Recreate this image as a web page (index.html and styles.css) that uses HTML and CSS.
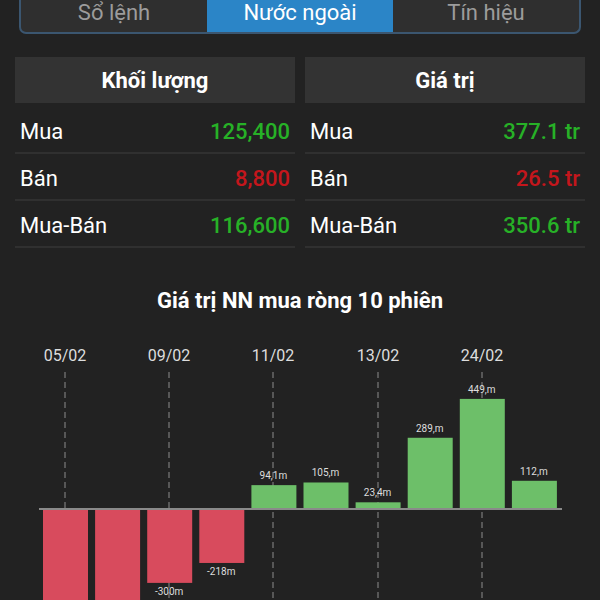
FILE: index.html
```html
<!DOCTYPE html>
<html>
  <head>
    <title>Nước ngoài</title>
    <link rel="stylesheet" href="styles.css">
  </head>
  <body>
    <div class="tabs">
      <div class="tab">Sổ lệnh</div>
      <div class="tab active">Nước ngoài</div>
      <div class="tab">Tín hiệu</div>
    </div>

    <div class="tables">
      <div class="table">
        <div class="table-head">Khối lượng</div>
        <div class="row"><span>Mua</span><span class="up">125,400</span></div>
        <div class="row"><span>Bán</span><span class="down">8,800</span></div>
        <div class="row"><span>Mua-Bán</span><span class="up">116,600</span></div>
      </div>
      <div class="table">
        <div class="table-head">Giá trị</div>
        <div class="row"><span>Mua</span><span class="up">377.1 tr</span></div>
        <div class="row"><span>Bán</span><span class="down">26.5 tr</span></div>
        <div class="row"><span>Mua-Bán</span><span class="up">350.6 tr</span></div>
      </div>
    </div>

    <h2 class="chart-title">Giá trị NN mua ròng 10 phiên</h2>

    <svg class="chart" width="600" height="284" viewBox="0 316 600 284">
      <!-- date guides -->
      <g class="guides">
        <line x1="65" y1="372" x2="65" y2="600" />
        <line x1="169" y1="372" x2="169" y2="600" />
        <line x1="273" y1="372" x2="273" y2="600" />
        <line x1="378" y1="372" x2="378" y2="600" />
        <line x1="482" y1="372" x2="482" y2="600" />
      </g>
      <g class="dates">
        <text x="65" y="361">05/02</text>
        <text x="169" y="361">09/02</text>
        <text x="273" y="361">11/02</text>
        <text x="378" y="361">13/02</text>
        <text x="482" y="361">24/02</text>
      </g>
      <line class="axis" x1="39" y1="509" x2="562" y2="509" />
      <g id="bars"></g>
    </svg>

    <script>
      // net foreign buy value per session (million)
      const sessions = [
        { v: -420, label: "" },
        { v: -420, label: "" },
        { v: -300, label: "-300m" },
        { v: -218, label: "-218m" },
        { v: 94.1, label: "94,1m" },
        { v: 105, label: "105,m" },
        { v: 23.4, label: "23,4m" },
        { v: 289, label: "289,m" },
        { v: 449, label: "449,m" },
        { v: 112, label: "112,m" },
      ];
      const bars = document.getElementById("bars");
      const ns = "http://www.w3.org/2000/svg";
      const base = 509;
      const scale = 0.243;

      sessions.forEach((s, i) => {
        const cx = 65 + i * 52.1;
        const h = Math.abs(s.v) * scale;
        const rect = document.createElementNS(ns, "rect");
        rect.setAttribute("x", cx - 22);
        rect.setAttribute("width", 45);
        if (s.v >= 0) {
          rect.setAttribute("y", base - 1 - h);
          rect.setAttribute("height", h);
          rect.setAttribute("class", "bar-up");
        } else {
          rect.setAttribute("y", base + 1);
          rect.setAttribute("height", h);
          rect.setAttribute("class", "bar-down");
        }
        bars.appendChild(rect);

        if (s.label) {
          const t = document.createElementNS(ns, "text");
          t.setAttribute("x", cx);
          t.setAttribute("y", s.v >= 0 ? base - h - 7 : base + h + 13);
          t.setAttribute("class", "bar-label");
          t.textContent = s.label;
          bars.appendChild(t);
        }
      });
    </script>
  </body>
</html>
```

FILE: styles.css
```css
body {
  margin: 0;
  background-color: #222222;
  font-family: Roboto, "Noto Sans", sans-serif;
  color: #ffffff;
  overflow: hidden;
}

.tabs {
  display: grid;
  grid-template-columns: 1fr 1fr 1fr;
  margin: -8px 19px 0;
  height: 40px;
  border: 2px solid #3b5670;
  border-top: none;
  border-radius: 0 0 7px 7px;
  overflow: hidden;
  background-color: #2f2f2f;
}

.tab {
  display: flex;
  justify-content: center;
  align-items: center;
  font-size: 22px;
  color: #9c9c9c;
}

.tab.active {
  background-color: #2b85c7;
  color: #ffffff;
}

.tables {
  display: flex;
  gap: 10px;
  padding: 23px 15px 0;
}

.table {
  flex: 1;
}

.table-head {
  height: 46px;
  display: flex;
  justify-content: center;
  align-items: center;
  background-color: #333333;
  font-size: 22px;
  font-weight: bold;
  margin-bottom: 4px;
}

.row {
  display: flex;
  justify-content: space-between;
  align-items: center;
  height: 42px;
  padding: 3px 5px 0;
  border-bottom: 2px solid #303030;
  font-size: 22px;
}

.up {
  color: #27b127;
  font-weight: 500;
}

.down {
  color: #c4161c;
  font-weight: 500;
}

.chart-title {
  margin: 41px 0 0;
  text-align: center;
  font-size: 22px;
  font-weight: bold;
  line-height: 24px;
}

.chart {
  display: block;
  margin-top: 3px;
}

.guides line {
  stroke: #6a6a6a;
  stroke-width: 1.5;
  stroke-dasharray: 6 4;
}

.dates text {
  fill: #dddddd;
  font-size: 16px;
  text-anchor: middle;
  font-family: Roboto, sans-serif;
}

.axis {
  stroke: #8a8a8a;
  stroke-width: 2;
}

.bar-up {
  fill: #6dbf69;
}

.bar-down {
  fill: #d84b5d;
}

.bar-label {
  fill: #dddddd;
  font-size: 10px;
  text-anchor: middle;
  font-family: Roboto, sans-serif;
}
```
